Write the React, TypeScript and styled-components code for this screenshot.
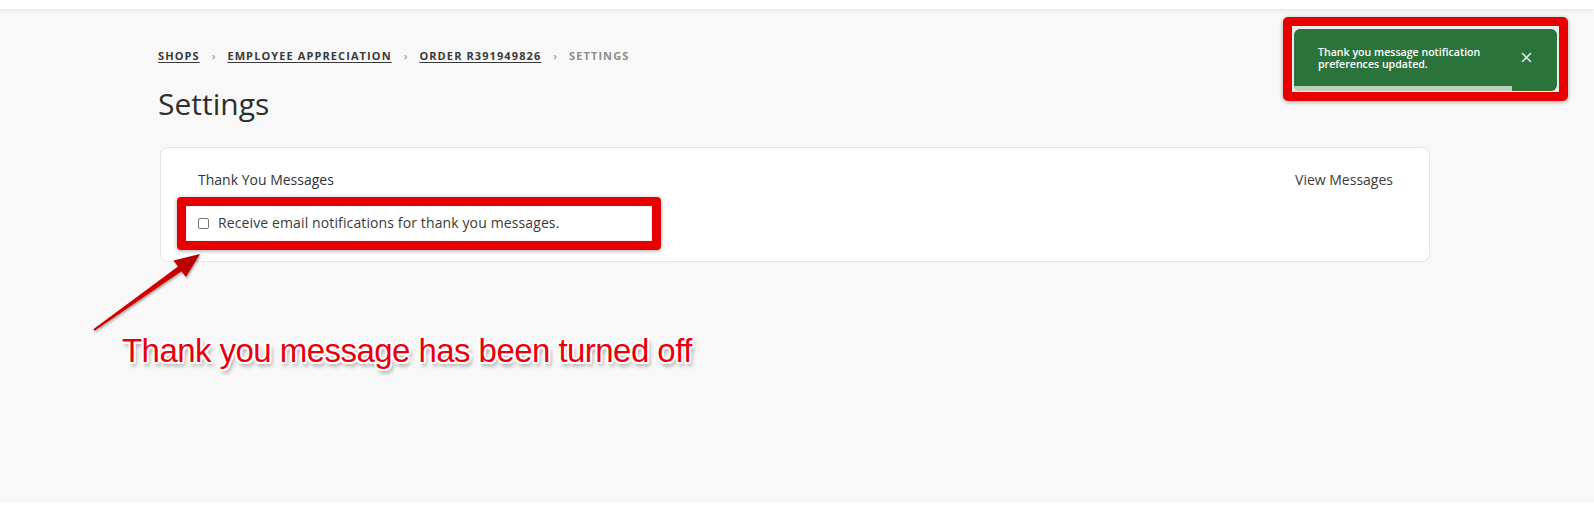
import React from "react";
import styled, { createGlobalStyle } from "styled-components";

const GlobalStyle = createGlobalStyle`
  html, body { margin: 0; padding: 0; background: #ffffff; }
  body { font-family: "Open Sans", "Noto Sans", Arial, sans-serif; color: #333; }
  * { box-sizing: border-box; }
`;

const Page = styled.div`
  position: relative;
  width: 100%;
  height: 523px;
  overflow: hidden;
`;

const TopBar = styled.header`
  height: 9px;
  background: #ffffff;
  box-shadow: 0 2px 4px rgba(0, 0, 0, 0.07);
  position: relative;
  z-index: 1;
`;

const Main = styled.main`
  height: 494px;
  background: #f8f8f8;
  padding: 39px 0 0 158px;
`;

const Crumbs = styled.nav`
  display: flex;
  align-items: center;
  gap: 12px;
  height: 16px;
  font-size: 11px;
  line-height: 16px;
  font-weight: 700;
  letter-spacing: 1.1px;
  text-transform: uppercase;
`;

const CrumbLink = styled.a`
  color: #3a3a3a;
  text-decoration: underline;
  text-underline-offset: 2px;
  text-decoration-thickness: 1px;
`;

const CrumbSep = styled.span`
  color: #9a9a9a;
  font-weight: 600;
  letter-spacing: 0;
`;

const CrumbCurrent = styled.span`
  color: #8c8c8c;
`;

const Title = styled.h1`
  margin: 22px 0 0 0;
  font-size: 30px;
  line-height: 36px;
  font-weight: 400;
  color: #2e2e2e;
`;

const Card = styled.section`
  margin: 25px 0 0 2px;
  width: 1270px;
  height: 115px;
  background: #ffffff;
  border: 1px solid #e4e4e4;
  border-radius: 8px;
  padding: 22px 36px 0 37px;
`;

const CardHeader = styled.div`
  display: flex;
  justify-content: space-between;
  font-size: 14px;
  line-height: 20px;
  color: #333;
`;

const ViewLink = styled.a`
  color: #3c3c3c;
  text-decoration: none;
`;

const CheckRow = styled.label`
  display: flex;
  align-items: center;
  gap: 9px;
  margin-top: 23px;
  font-size: 14px;
  line-height: 20px;
  letter-spacing: 0.12px;
  color: #3a3a3a;
`;

const Check = styled.input`
  appearance: none;
  margin: 0;
  width: 11px;
  height: 11px;
  border: 1px solid #767676;
  border-radius: 2px;
  background: #fff;
`;

const Footer = styled.footer`
  height: 20px;
  background: #ffffff;
`;

/* ---- overlays ---- */

const ToastFrame = styled.div`
  position: absolute;
  top: 17px;
  left: 1283px;
  border: 9px solid #e60000;
  border-radius: 5px;
  padding: 3px 2px 1px 2px;
  background: #ececec;
  box-shadow: 0 1px 4px rgba(0, 0, 0, 0.35);
`;

const Toast = styled.div`
  position: relative;
  width: 263px;
  height: 62px;
  background: #2a733b;
  border-radius: 6px;
  overflow: hidden;
  display: flex;
  align-items: center;
  justify-content: space-between;
  padding: 0 25px 5px 24px;
`;

const ToastText = styled.div`
  color: #ffffff;
  font-size: 10.6px;
  line-height: 12px;
  font-weight: 600;
`;

const Close = styled.button`
  border: 0;
  background: transparent;
  padding: 0;
  width: 11px;
  height: 11px;
  display: flex;
`;

const Progress = styled.div`
  position: absolute;
  left: 0;
  bottom: 0;
  height: 5px;
  background: #b7d2bd;
`;

const Highlight = styled.div`
  position: absolute;
  left: 177px;
  top: 197px;
  width: 484px;
  height: 53px;
  border: 9px solid #e60000;
  border-radius: 4px;
  box-shadow: 0 1px 4px rgba(0, 0, 0, 0.35), inset 0 0 2px rgba(0, 0, 0, 0.2);
`;

const ArrowSvg = styled.svg`
  position: absolute;
  left: 0;
  top: 0;
  overflow: visible;
`;

const Caption = styled.div`
  position: absolute;
  left: 122px;
  top: 331px;
  font-family: "Liberation Sans", Arial, sans-serif;
  font-size: 33px;
  line-height: 40px;
  color: #e8000c;
  letter-spacing: -0.55px;
  text-shadow:
    -2px 0 0 #fff, 2px 0 0 #fff, 0 -2px 0 #fff, 0 2px 0 #fff,
    -1.5px -1.5px 0 #fff, 1.5px -1.5px 0 #fff, -1.5px 1.5px 0 #fff, 1.5px 1.5px 0 #fff,
    2px 4px 4px rgba(0, 0, 0, 0.45);
`;

export default function App() {
  const progress = 83;
  return (
    <>
      <GlobalStyle />
      <Page>
        <TopBar />
        <Main>
          <Crumbs>
            <CrumbLink>Shops</CrumbLink>
            <CrumbSep>›</CrumbSep>
            <CrumbLink>Employee Appreciation</CrumbLink>
            <CrumbSep>›</CrumbSep>
            <CrumbLink>Order R391949826</CrumbLink>
            <CrumbSep>›</CrumbSep>
            <CrumbCurrent>Settings</CrumbCurrent>
          </Crumbs>
          <Title>Settings</Title>
          <Card>
            <CardHeader>
              <span>Thank You Messages</span>
              <ViewLink>View Messages</ViewLink>
            </CardHeader>
            <CheckRow>
              <Check type="checkbox" />
              Receive email notifications for thank you messages.
            </CheckRow>
          </Card>
        </Main>
        <Footer />

        <ToastFrame>
          <Toast>
            <ToastText>
              Thank you message notification
              <br />
              preferences updated.
            </ToastText>
            <Close aria-label="close">
              <svg width="11" height="11" viewBox="0 0 11 11">
                <path d="M1.5 1.5 L9.5 9.5 M9.5 1.5 L1.5 9.5" stroke="#d6e4d9" strokeWidth="1.6" strokeLinecap="round" />
              </svg>
            </Close>
            <Progress style={{ width: `${progress}%` }} />
          </Toast>
        </ToastFrame>

        <Highlight />

        <ArrowSvg width="1594" height="523">
          <defs>
            <linearGradient id="arrowGrad" x1="94" y1="330" x2="200" y2="254" gradientUnits="userSpaceOnUse">
              <stop offset="0" stopColor="#c40000" />
              <stop offset="0.6" stopColor="#d80000" />
              <stop offset="1" stopColor="#a80000" />
            </linearGradient>
            <filter id="arrowShadow" x="-20%" y="-20%" width="140%" height="140%">
              <feDropShadow dx="1" dy="1.5" stdDeviation="1" floodColor="#000" floodOpacity="0.35" />
            </filter>
          </defs>
          <polygon
            points="93.3,329.2 178,266.5 173.5,260.5 200,254 186,277 181.4,271.2 94.7,330.8"
            fill="url(#arrowGrad)"
            filter="url(#arrowShadow)"
          />
        </ArrowSvg>

        <Caption>Thank you message has been turned off</Caption>
      </Page>
    </>
  );
}
